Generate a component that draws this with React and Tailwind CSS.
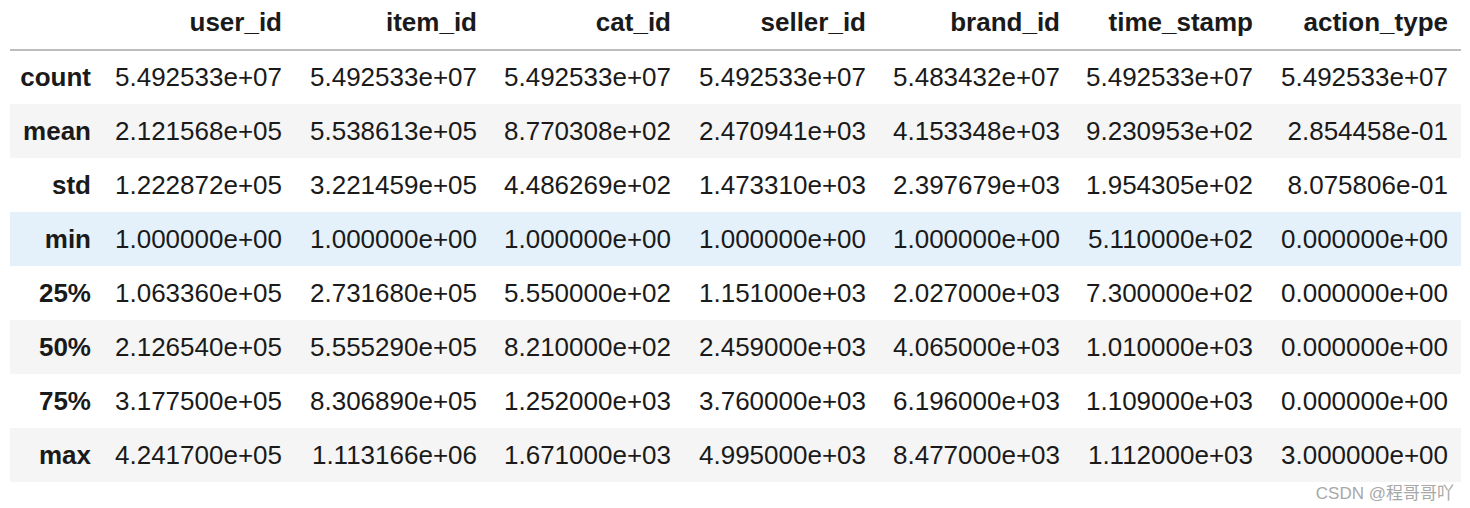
const columns = [
  'user_id',
  'item_id',
  'cat_id',
  'seller_id',
  'brand_id',
  'time_stamp',
  'action_type',
];

// describe() 結果
const rows = [
  ['count', ['5.492533e+07', '5.492533e+07', '5.492533e+07', '5.492533e+07', '5.483432e+07', '5.492533e+07', '5.492533e+07']],
  ['mean', ['2.121568e+05', '5.538613e+05', '8.770308e+02', '2.470941e+03', '4.153348e+03', '9.230953e+02', '2.854458e-01']],
  ['std', ['1.222872e+05', '3.221459e+05', '4.486269e+02', '1.473310e+03', '2.397679e+03', '1.954305e+02', '8.075806e-01']],
  ['min', ['1.000000e+00', '1.000000e+00', '1.000000e+00', '1.000000e+00', '1.000000e+00', '5.110000e+02', '0.000000e+00']],
  ['25%', ['1.063360e+05', '2.731680e+05', '5.550000e+02', '1.151000e+03', '2.027000e+03', '7.300000e+02', '0.000000e+00']],
  ['50%', ['2.126540e+05', '5.555290e+05', '8.210000e+02', '2.459000e+03', '4.065000e+03', '1.010000e+03', '0.000000e+00']],
  ['75%', ['3.177500e+05', '8.306890e+05', '1.252000e+03', '3.760000e+03', '6.196000e+03', '1.109000e+03', '0.000000e+00']],
  ['max', ['4.241700e+05', '1.113166e+06', '1.671000e+03', '4.995000e+03', '8.477000e+03', '1.112000e+03', '3.000000e+00']],
];

const rowBg = (i) => {
  if (i === 3) return 'bg-[#e4f1fb]'; // hover row
  return i % 2 === 1 ? 'bg-[#f5f5f5]' : 'bg-white';
};

const App = () => {
  return (
    <div className="relative w-[1470px] h-[508px] bg-white font-['Liberation_Sans',Arial,sans-serif] text-[#1a1a1a]">
      <div className="pl-[10px]">
        <table className="table-fixed border-collapse w-[1451px] text-[26px]">
          <colgroup>
            <col className="w-[94px]" />
            <col className="w-[191px]" />
            <col className="w-[195px]" />
            <col className="w-[194px]" />
            <col className="w-[195px]" />
            <col className="w-[194px]" />
            <col className="w-[193px]" />
            <col className="w-[195px]" />
          </colgroup>
          <thead>
            <tr className="h-[50px] border-b-2 border-[#bdbdbd]">
              <th className="pr-[13px]" />
              {columns.map((c) => (
                <th key={c} className="pr-[13px] pb-[4px] text-right font-bold">
                  {c}
                </th>
              ))}
            </tr>
          </thead>
          <tbody>
            {rows.map(([name, vals], i) => (
              <tr key={name} className={`h-[54px] ${rowBg(i)}`}>
                <th className="pr-[13px] text-right font-bold">{name}</th>
                {vals.map((v, j) => (
                  <td key={j} className="pr-[13px] text-right whitespace-nowrap">
                    {v}
                  </td>
                ))}
              </tr>
            ))}
          </tbody>
        </table>
      </div>
      {/* 浮水印 */}
      <div className="absolute right-[16px] bottom-[6px] text-[17px] leading-none text-[#a8a8a8] font-['Liberation_Sans','Noto_Sans_CJK_SC',sans-serif]">
        CSDN @程哥哥吖
      </div>
    </div>
  );
};

export default App;
